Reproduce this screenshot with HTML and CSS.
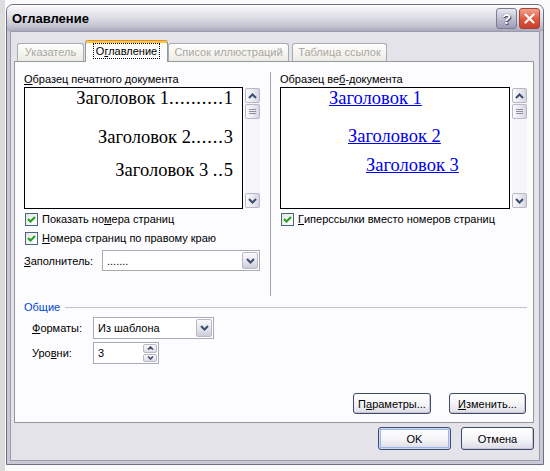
FILE: index.html
```html
<!DOCTYPE html>
<html lang="ru">
  <head>
    <meta charset="UTF-8" />
    <title>Оглавление</title>
    <link rel="stylesheet" href="styles.css">
  </head>
  <body>
    <div class="desk">
      <div class="window">
        <div class="titlebar">
          <span class="title">Оглавление</span>
          <span class="cap-btn help">?</span>
          <span class="cap-btn close">
            <svg width="21" height="21" viewBox="0 0 21 21"><path d="M6 6 L15 15 M15 6 L6 15" stroke="#fff" stroke-width="2.4" stroke-linecap="round"/></svg>
          </span>
        </div>

        <div class="client">
          <div class="tabs">
            <div class="tab tab-index">Указатель</div>
            <div class="tab active"><span class="focus">О<u>г</u>лавление</span></div>
            <div class="tab tab-figures">Список иллюстраций</div>
            <div class="tab tab-links">Таблица ссылок</div>
          </div>

          <div class="panel">
            <div class="columns">
              <div class="col col-left">
                <div class="caption"><u>О</u>бразец печатного документа</div>
                <div class="preview-row">
                  <div class="preview print">
                    <div class="line l1">Заголовок 1<span class="dots">..........</span>1</div>
                    <div class="line l2">Заголовок 2<span class="dots">......</span>3</div>
                    <div class="line l3">Заголовок 3 <span class="dots">..</span>5</div>
                  </div>
                  <div class="vscroll">
                    <span class="sb-btn"><svg width="9" height="6" viewBox="0 0 9 6"><polyline points="1,5 4.5,1.5 8,5" fill="none" stroke="#3d4d6d" stroke-width="2"/></svg></span>
                    <span class="sb-thumb"><i></i><i></i><i></i></span>
                    <span class="sb-track"></span>
                    <span class="sb-btn"><svg width="9" height="6" viewBox="0 0 9 6"><polyline points="1,1 4.5,4.5 8,1" fill="none" stroke="#3d4d6d" stroke-width="2"/></svg></span>
                  </div>
                </div>
                <div class="check first">
                  <span class="cb"><svg width="11" height="11" viewBox="0 0 11 11"><polyline points="2,5 4.5,7.5 9,3" fill="none" stroke="#21a121" stroke-width="2"/></svg></span>
                  Показать но<u>м</u>ера страниц
                </div>
                <div class="check">
                  <span class="cb"><svg width="11" height="11" viewBox="0 0 11 11"><polyline points="2,5 4.5,7.5 9,3" fill="none" stroke="#21a121" stroke-width="2"/></svg></span>
                  <u>Н</u>омера страниц по правому краю
                </div>
                <div class="field filler">
                  <span class="flabel"><u>З</u>аполнитель:</span>
                  <div class="combo combo-filler">
                    <span class="combo-text">.......</span>
                    <span class="drop"><svg width="9" height="6" viewBox="0 0 9 6"><polyline points="1,1 4.5,4.5 8,1" fill="none" stroke="#3d4d6d" stroke-width="2"/></svg></span>
                  </div>
                </div>
              </div>

              <div class="vline"></div>

              <div class="col col-right">
                <div class="caption">Образец ве<u>б</u>-документа</div>
                <div class="preview-row">
                  <div class="preview web">
                    <div class="line w1"><a>Заголовок 1</a></div>
                    <div class="line w2"><a>Заголовок 2</a></div>
                    <div class="line w3"><a>Заголовок 3</a></div>
                  </div>
                  <div class="vscroll">
                    <span class="sb-btn"><svg width="9" height="6" viewBox="0 0 9 6"><polyline points="1,5 4.5,1.5 8,5" fill="none" stroke="#3d4d6d" stroke-width="2"/></svg></span>
                    <span class="sb-thumb"><i></i><i></i><i></i></span>
                    <span class="sb-track"></span>
                    <span class="sb-btn"><svg width="9" height="6" viewBox="0 0 9 6"><polyline points="1,1 4.5,4.5 8,1" fill="none" stroke="#3d4d6d" stroke-width="2"/></svg></span>
                  </div>
                </div>
                <div class="check first">
                  <span class="cb"><svg width="11" height="11" viewBox="0 0 11 11"><polyline points="2,5 4.5,7.5 9,3" fill="none" stroke="#21a121" stroke-width="2"/></svg></span>
                  <u>Г</u>иперссылки вместо номеров страниц
                </div>
              </div>
            </div>

            <div class="group-head"><span>Общие</span><span class="rule"></span></div>

            <div class="field formats">
              <span class="flabel"><u>Ф</u>орматы:</span>
              <div class="combo combo-formats">
                <span class="combo-text">Из шаблона</span>
                <span class="drop"><svg width="9" height="6" viewBox="0 0 9 6"><polyline points="1,1 4.5,4.5 8,1" fill="none" stroke="#3d4d6d" stroke-width="2"/></svg></span>
              </div>
            </div>
            <div class="field levels">
              <span class="flabel">Уро<u>в</u>ни:</span>
              <div class="spin">
                <span class="combo-text">3</span>
                <span class="spin-btns">
                  <span class="spin-btn"><svg width="7" height="4" viewBox="0 0 7 4"><polyline points="1,3.5 3.5,1 6,3.5" fill="none" stroke="#3d4d6d" stroke-width="1.6"/></svg></span>
                  <span class="spin-btn"><svg width="7" height="4" viewBox="0 0 7 4"><polyline points="1,0.5 3.5,3 6,0.5" fill="none" stroke="#3d4d6d" stroke-width="1.6"/></svg></span>
                </span>
              </div>
            </div>

            <div class="panel-buttons">
              <button type="button" class="btn btn-params">П<u>а</u>раметры...</button>
              <button type="button" class="btn btn-edit"><u>И</u>зменить...</button>
            </div>
          </div>

          <div class="dialog-buttons">
            <button type="button" class="btn btn-ok default">OK</button>
            <button type="button" class="btn btn-cancel">Отмена</button>
          </div>
        </div>
      </div>
    </div>
  </body>
</html>
```

FILE: styles.css
```css
body {
  margin: 0;
  background: #fff;
  font-family: "Liberation Sans", Arial, sans-serif;
  font-size: 11px;
  color: #000;
}

.desk {
  width: 550px;
  height: 471px;
  box-sizing: border-box;
  padding: 4px 0 0 6px;
  overflow: hidden;
  background: linear-gradient(to right, #dcdcdc 0 5px, #fbfbfb 5px);
}

.window {
  width: 538px;
  height: 461px;
  box-sizing: border-box;
  display: flex;
  flex-direction: column;
  border: 1px solid #6f6f82;
  border-radius: 7px 7px 0 0;
  background: #c9c9d6;
  overflow: hidden;
}

/* title bar */
.titlebar {
  flex: none;
  height: 26px;
  display: flex;
  align-items: center;
  padding: 0 3px 0 5px;
  background: linear-gradient(#fdfdfe, #ebebf0 25%, #d9d9e2 55%, #c4c4d2 80%, #a9a9bd);
}
.title {
  flex: 1;
  font-weight: bold;
  font-size: 13px;
  padding-top: 1px;
}
.cap-btn {
  width: 21px;
  height: 21px;
  box-sizing: border-box;
  margin-left: 2px;
  border-radius: 3px;
  display: flex;
  align-items: center;
  justify-content: center;
}
.help {
  border: 1px solid #7b7b94;
  background: linear-gradient(#e9e9f2, #b7b7cc 60%, #9c9cb6);
  color: #fff;
  font-weight: bold;
  font-size: 15px;
  text-shadow: 0 0 1px #30304a, 1px 1px 0 #50506a;
}
.close {
  border: 1px solid #a2443a;
  background: linear-gradient(#f2a08c, #e0553c 55%, #c8402c);
}

/* client area */
.client {
  flex: 1;
  margin: 0 3px 3px;
  display: flex;
  flex-direction: column;
  border: 1px solid #9b9bae;
  background: #e4e3e9;
  padding: 8px 5px 0 3px;
}

.tabs {
  height: 21px;
  display: flex;
  align-items: flex-end;
  padding-left: 3px;
  position: relative;
  z-index: 1;
}
.tab {
  height: 18px;
  box-sizing: border-box;
  border: 1px solid #a4acb4;
  border-bottom: none;
  border-radius: 3px 3px 0 0;
  background: linear-gradient(#fefefd, #f4f3ee 60%, #ebeae3);
  color: #a9a8a2;
  text-align: center;
  line-height: 17px;
}
.tab-index { width: 67px; }
.tab-figures { width: 121px; }
.tab-links { width: 95px; margin-left: 3px; }
.tab.active {
  width: 83px;
  height: 22px;
  margin: 0 0 -1px 1px;
  border-color: #919b9c;
  border-top: 1px solid #e68b2c;
  box-shadow: inset 0 2px 0 #ffc73c;
  background: #fcfcfe;
  color: #000;
  line-height: 21px;
}
.focus {
  outline: 1px dotted #000;
  outline-offset: 0;
  padding: 1px 2px;
}

.panel {
  height: 362px;
  box-sizing: border-box;
  display: flex;
  flex-direction: column;
  border: 1px solid #919b9c;
  background: #fcfcfe;
  padding: 10px 6px 0 9px;
}

.columns {
  height: 224px;
  display: flex;
}
.col-left { width: 237px; }
.col-right { width: 247px; }
.vline {
  width: 1px;
  margin: 0 9px;
  background: #a0a0a8;
}

.caption {
  height: 15px;
  line-height: 15px;
}

.preview-row {
  display: flex;
}
.preview {
  height: 122px;
  box-sizing: border-box;
  border: 1px solid #000;
  background: #fff;
  font-family: "Liberation Serif", "Times New Roman", serif;
  font-size: 18.5px;
}
.print {
  width: 219px;
  padding-right: 9px;
  text-align: right;
}
.dots { letter-spacing: 0.85px; }
.web { width: 230px; }
.line {
  height: 20px;
  line-height: 20px;
  white-space: nowrap;
}
.l2 { margin-top: 19px; }
.l3 { margin-top: 13px; }
.w1 { padding-left: 48px; }
.w2 { padding-left: 67px; margin-top: 18px; }
.w3 { padding-left: 85px; margin-top: 9px; }
.web a {
  color: #0000ee;
  text-decoration: underline;
}

/* scroll bar */
.vscroll {
  width: 15px;
  height: 120px;
  margin: 1px 0 0 2px;
  display: flex;
  flex-direction: column;
  background: #f6f6f9;
}
.sb-btn,
.sb-thumb {
  height: 15px;
  flex: none;
  box-sizing: border-box;
  border: 1px solid #b8b8c8;
  border-radius: 2px;
  background: linear-gradient(to right, #fbfbfd, #e6e6ee 60%, #d6d6e2);
  display: flex;
  align-items: center;
  justify-content: center;
}
.sb-thumb {
  margin-top: 1px;
  flex-direction: column;
  gap: 1px;
}
.sb-thumb i {
  display: block;
  width: 7px;
  height: 1px;
  background: #8e8ea6;
}
.sb-track { flex: 1; }

/* check boxes */
.check {
  height: 13px;
  display: flex;
  align-items: center;
  margin-top: 6px;
  line-height: 13px;
}
.check.first { margin-top: 4px; }
.cb {
  width: 13px;
  height: 13px;
  box-sizing: border-box;
  margin: 0 4px 0 1px;
  border: 1px solid #4c6482;
  background: linear-gradient(135deg, #e6e6e0, #fff);
  display: flex;
  align-items: center;
  justify-content: center;
}

/* fields */
.field {
  display: flex;
  align-items: center;
}
.filler {
  height: 21px;
  margin-top: 5px;
}
.filler .flabel { width: 78px; }
.formats {
  height: 22px;
  margin-top: 4px;
  padding-left: 8px;
}
.levels {
  height: 22px;
  margin-top: 3px;
  padding-left: 8px;
}
.formats .flabel,
.levels .flabel { width: 61px; }

.combo,
.spin {
  height: 100%;
  box-sizing: border-box;
  display: flex;
  align-items: center;
  border: 1px solid #a5acb2;
  background: #fff;
  padding: 1px;
}
.combo-filler { width: 158px; }
.combo-formats { width: 121px; }
.spin { width: 66px; }
.combo-text {
  flex: 1;
  padding-left: 3px;
}
.drop {
  width: 16px;
  height: 100%;
  box-sizing: border-box;
  border: 1px solid #b8b8c8;
  border-radius: 2px;
  background: linear-gradient(#fbfbfd, #e2e2ea 60%, #cdcdda);
  display: flex;
  align-items: center;
  justify-content: center;
}
.spin-btns {
  width: 14px;
  height: 100%;
  display: flex;
  flex-direction: column;
  gap: 1px;
}
.spin-btn {
  flex: 1;
  box-sizing: border-box;
  border: 1px solid #b8b8c8;
  border-radius: 2px;
  background: linear-gradient(#fbfbfd, #dcdce6);
  display: flex;
  align-items: center;
  justify-content: center;
}

/* group header */
.group-head {
  height: 13px;
  margin-top: 4px;
  display: flex;
  align-items: center;
  color: #0046d5;
}
.group-head .rule {
  flex: 1;
  height: 1px;
  margin: 1px 0 0 5px;
  background: #c2c2ce;
}

/* buttons */
.btn {
  height: 21px;
  box-sizing: border-box;
  padding: 0;
  border: 1px solid #3c4a6c;
  border-radius: 3px;
  background: linear-gradient(#ffffff, #f4f4f7 55%, #dcdbe5);
  box-shadow: inset -1px -1px 0 #c8c7d5;
  font-family: inherit;
  font-size: 11px;
  color: #000;
}
.panel-buttons {
  margin-top: 29px;
  display: flex;
  justify-content: flex-end;
  gap: 18px;
  padding-right: 1px;
}
.btn-params { width: 78px; }
.btn-edit { width: 77px; }

.dialog-buttons {
  margin-top: 4px;
  display: flex;
  justify-content: flex-end;
  gap: 10px;
}
.btn-ok,
.btn-cancel {
  width: 73px;
  height: 23px;
}
.btn.default {
  box-shadow: inset 0 0 0 1px #cfdcf3, inset 0 0 0 2px #9db4e4;
}
```
